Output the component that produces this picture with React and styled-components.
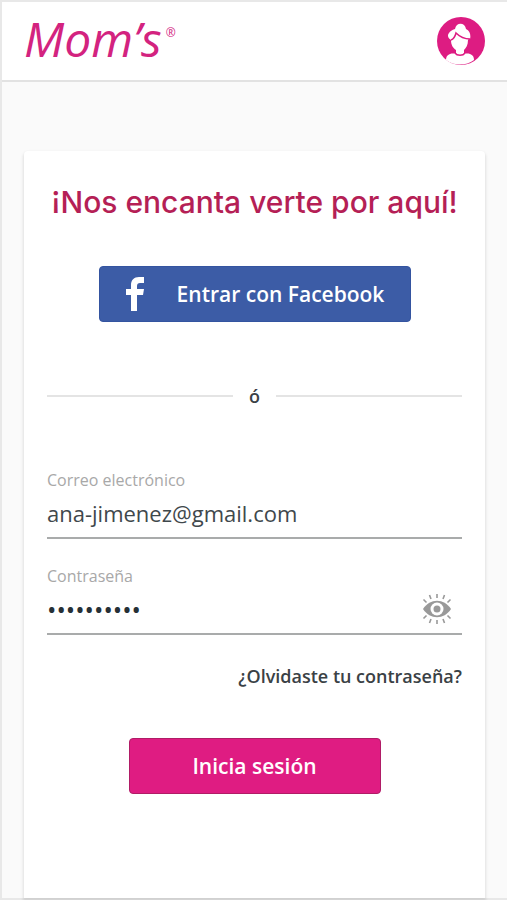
import React, { useState } from "react";
import styled, { createGlobalStyle } from "styled-components";

const GlobalStyle = createGlobalStyle`
  * {
    box-sizing: border-box;
  }
  body {
    margin: 0;
    background: #fafafa;
    font-family: "Open Sans", sans-serif;
    color: #3a4145;
  }
`;

//layout
const Page = styled.div`
  display: flex;
  flex-direction: column;
  min-height: 100vh;
  border: 2px solid #e8e8e8;
  border-right: none;
`;

const Header = styled.header`
  display: flex;
  justify-content: space-between;
  align-items: center;
  height: 80px;
  padding: 0 22px;
  background: #fff;
  border-bottom: 2px solid #e2e2e2;
`;

const Main = styled.main`
  display: flex;
  flex: 1;
  padding: 69px 22px 0;
`;

const Card = styled.section`
  flex: 1;
  min-width: 0;
  padding: 31px 23px;
  background: #fff;
  border-radius: 4px 4px 0 0;
  box-shadow: 0 2px 3px 1px rgba(0, 0, 0, 0.1);
`;

//header
const Logo = styled.a`
  display: flex;
  align-items: flex-start;
  padding-bottom: 4px;
  font-family: "Open Sans", sans-serif;
  font-size: 48px;
  line-height: 48px;
  font-style: italic;
  color: #d3237f;
  text-decoration: none;
`;

const Registered = styled.span`
  margin-left: 4px;
  font-size: 12px;
  line-height: 36px;
  font-style: normal;
`;

const ProfileButton = styled.button`
  display: flex;
  padding: 0;
  border: none;
  background: none;
  cursor: pointer;
`;

//form
const Title = styled.h1`
  margin: 0;
  font-family: Inter, sans-serif;
  font-size: 30px;
  line-height: 40px;
  font-weight: 500;
  font-feature-settings: "case";
  text-align: center;
  color: #b51f56;
`;

const Form = styled.form`
  display: flex;
  flex-direction: column;
`;

const Button = styled.button`
  display: flex;
  justify-content: center;
  align-items: center;
  gap: 32px;
  align-self: center;
  width: ${(props) => (props.$wide ? "312px" : "252px")};
  max-width: 100%;
  height: 56px;
  margin-top: ${(props) => (props.$wide ? "44px" : "46px")};
  padding: 0;
  border: 1px solid ${(props) => props.$border};
  border-radius: 4px;
  background: ${(props) => props.$color};
  color: #fff;
  font-family: "Open Sans", sans-serif;
  font-size: 21px;
  line-height: 32px;
  font-weight: 600;
  cursor: pointer;
`;

const Divider = styled.div`
  display: flex;
  align-items: center;
  gap: 16px;
  margin: 58px 0 56px;
  font-size: 18px;
  line-height: 32px;
  font-weight: 600;

  &::before,
  &::after {
    content: "";
    flex: 1;
    height: 2px;
    background: #e4e4e4;
  }
`;

const Field = styled.div`
  display: flex;
  flex-direction: column;
  margin-bottom: 25px;
  border-bottom: 2px solid #a9abab;
`;

const Label = styled.label`
  font-size: 16px;
  line-height: 24px;
  color: #a8a8a8;
`;

const InputRow = styled.div`
  display: flex;
  align-items: center;
  height: 45px;
  padding-bottom: 4px;
`;

const Input = styled.input`
  flex: 1;
  min-width: 0;
  padding: 0;
  border: none;
  outline: none;
  background: none;
  font-family: "Open Sans", sans-serif;
  font-size: 22px;
  line-height: 32px;
  color: #3f484c;

  &[type="password"] {
    font-size: 25px;
    color: #263036;
  }
`;

const EyeButton = styled(ProfileButton)`
  margin-right: 10px;
`;

const ForgotLink = styled.a`
  align-self: flex-end;
  font-size: 18px;
  line-height: 32px;
  font-weight: 600;
  color: #3a4145;
  text-decoration: none;
`;

const AvatarIcon = () => (
  <svg width="48" height="48" viewBox="0 0 48 48" aria-hidden="true">
    <circle cx="24" cy="24" r="24" fill="#dd1c82" />
    <path
      d="M18 12c1-7 10-7 11 0 4 2 5 6 4 10-1 0-2 0-2 1 0 5-2 8-4 10v3c2 1 4 0 6 1 3 1 4 3 4 6-8 6-20 6-28 0 0-3 1-5 4-6 2-1 4 0 6-1v-3c-3-2-5-5-5-10-3-2-4-5-2-7 1-2 3-3 6-4z"
      fill="#fff"
    />
    <path
      d="M14 23c3-1 4-3 5-7 4 4 8 6 14 6"
      fill="none"
      stroke="#dd1c82"
      strokeWidth="1.500"
    />
    <path
      d="M18 36c2 3 8 3 10 0"
      fill="none"
      stroke="#dd1c82"
      strokeWidth="1.500"
    />
  </svg>
);

const FacebookIcon = () => (
  <svg width="20" height="34" viewBox="0 0 20 34" aria-hidden="true">
    <path
      d="M6 34V18H1v-6h5V8c0-5 3-8 8-8h5v6h-4c-2 0-3 1-3 3v3h7l-1 6h-6v16z"
      fill="#fff"
    />
  </svg>
);

const EyeIcon = () => (
  <svg width="30" height="32" viewBox="0 0 30 32" aria-hidden="true">
    <path
      d="M1 16C8 5 22 5 29 16 22 27 8 27 1 16z"
      fill="#999"
    />
    <circle cx="15" cy="16" r="6.5" fill="#fff" />
    <circle cx="15" cy="16" r="3.5" fill="#999" />
    <path
      d="M15 1v4M7.500 2l1.500 4M22.500 2L21 6M1.500 6.500l3 3M28.500 6.500l-3 3M15 31v-4M7.500 30L9 26M22.500 30L21 26M1.500 25.500l3-3M28.500 25.500l-3-3"
      stroke="#999"
      strokeWidth="1.600"
    />
  </svg>
);

const App = () => {
  //state
  let [email, setEmail] = useState("ana-jimenez@gmail.com");
  let [password, setPassword] = useState("anajimenez");
  let [passwordshow, setPasswordshow] = useState(false);

  return (
    <Page>
      <GlobalStyle />
      <Header>
        <Logo href="#">
          Mom’s<Registered>®</Registered>
        </Logo>
        <ProfileButton type="button" aria-label="Perfil">
          <AvatarIcon />
        </ProfileButton>
      </Header>
      <Main>
        <Card>
          <Title>¡Nos encanta verte por aquí!</Title>
          <Form onSubmit={(e) => e.preventDefault()}>
            <Button type="button" $wide $color="#3c5ca6" $border="#3454a0">
              <FacebookIcon />
              Entrar con Facebook
            </Button>
            <Divider>ó</Divider>
            <Field>
              <Label htmlFor="email">Correo electrónico</Label>
              <InputRow>
                <Input
                  id="email"
                  type="email"
                  value={email}
                  onChange={(e) => setEmail(e.target.value)}
                />
              </InputRow>
            </Field>
            <Field>
              <Label htmlFor="password">Contraseña</Label>
              <InputRow>
                <Input
                  id="password"
                  type={passwordshow ? "text" : "password"}
                  value={password}
                  onChange={(e) => setPassword(e.target.value)}
                />
                <EyeButton
                  type="button"
                  aria-label="Mostrar contraseña"
                  onClick={() => setPasswordshow(!passwordshow)}
                >
                  <EyeIcon />
                </EyeButton>
              </InputRow>
            </Field>
            <ForgotLink href="#">¿Olvidaste tu contraseña?</ForgotLink>
            <Button type="submit" $color="#df1c82" $border="#b01c66">
              Inicia sesión
            </Button>
          </Form>
        </Card>
      </Main>
    </Page>
  );
};

export default App;
